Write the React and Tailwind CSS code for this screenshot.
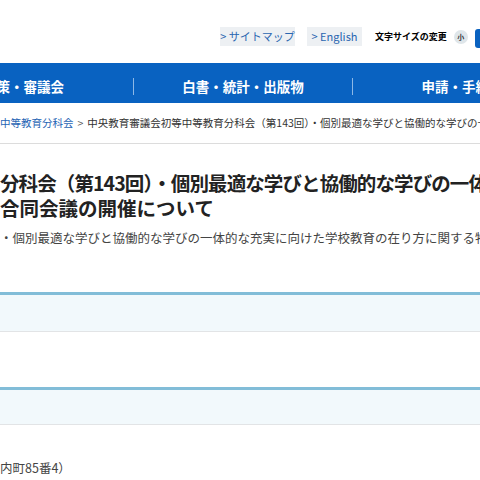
export default function App() {
  const jp = { fontFamily: '"Noto Sans CJK JP", "Noto Sans", sans-serif' };
  return (
    <div className="w-[480px] h-[480px] overflow-hidden bg-white text-[#333]" style={jp}>
      {/* top header */}
      <div className="h-[63px] flex items-start pt-[27px] pl-[220px] whitespace-nowrap">
        <a className="shrink-0 h-[19px] w-[75px] flex items-center justify-center bg-[#edf0f3] text-[#2a66b0] text-[11px]">
          &gt; サイトマップ
        </a>
        <a className="shrink-0 ml-[12px] h-[19px] w-[55px] flex items-center justify-center bg-[#edf0f3] text-[#2a66b0] text-[11px]">
          &gt; English
        </a>
        <span className="shrink-0 ml-[13px] mt-[3px] text-[9px] font-bold text-black">文字サイズの変更</span>
        <span className="shrink-0 ml-[7px] mt-[3px] w-[14px] h-[14px] rounded-full bg-[#dfe6ea] text-[7px] font-bold text-[#333] flex items-center justify-center">小</span>
        <span className="shrink-0 ml-[7px] mt-[2px] h-[19px] w-[20px] rounded-[3px] bg-[#0a62c0]" />
      </div>

      {/* global nav */}
      <nav className="h-[40px] pt-[6px] bg-[#0962c1] flex items-center -ml-[86px] whitespace-nowrap">
        {["政策・審議会", "白書・統計・出版物", "申請・手続き"].map((t, i) => (
          <div
            key={t}
            className={`w-[219px] shrink-0 flex items-center justify-center text-white font-bold text-[13.5px] h-[17px] ${i > 0 ? "border-l border-[#8db8e6]" : ""}`}
          >
            {t}
          </div>
        ))}
      </nav>

      {/* breadcrumb */}
      <div className="h-[41px] border-b border-[#dcdcdc] flex items-center whitespace-nowrap text-[10.5px]">
        <span className="text-[#1f64b4]">中等教育分科会</span>
        <span className="mx-[4px] text-[#555]">&gt;</span>
        <span className="text-[#333]">中央教育審議会初等中等教育分科会（第143回）・個別最適な学びと協働的な学びの一体的な充実</span>
      </div>

      {/* title */}
      <h1 className="mt-[26px] text-[19.5px] leading-[25px] font-bold text-[#222] whitespace-nowrap">
        <div className="tracking-[-0.9px]">分科会（第143回）・個別最適な学びと協働的な学びの一体的な</div>
        <div>合同会議の開催について</div>
      </h1>

      <p className="mt-[9px] text-[12.5px] leading-[18px] text-[#444] whitespace-nowrap">
        ・個別最適な学びと協働的な学びの一体的な充実に向けた学校教育の在り方に関する特別部会
      </p>

      {/* section heads */}
      <div className="mt-[45px] h-[40px] border-t-[3px] border-[#82bdd8] border-b border-b-[#e2e4e6] bg-[#f2f9fc]" />
      <div className="mt-[55px] h-[38px] border-t-[3px] border-[#82bdd8] border-b border-b-[#e2e4e6] bg-[#f2f9fc]" />

      <p className="mt-[34px] text-[12.5px] leading-[18px] text-[#444] whitespace-nowrap">内町85番4）</p>
    </div>
  );
}
